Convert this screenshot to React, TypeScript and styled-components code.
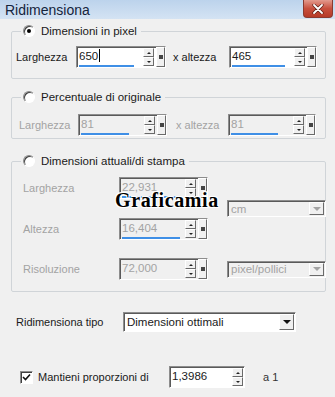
import React from 'react'
import styled, { createGlobalStyle, css } from 'styled-components'

const GlobalStyle = createGlobalStyle`
  * { box-sizing: border-box; }
  body {
    margin: 0;
    background: #f0f0f0;
    font-family: 'Liberation Sans', Arial, sans-serif;
    font-size: 11px;
    color: #1a1a1a;
  }
`

const Window = styled.div`
  position: relative;
  width: 335px;
  height: 397px;
  overflow: hidden;
  background: #f0f0f0;
`

const TitleBar = styled.div`
  display: flex;
  align-items: center;
  height: 19px;
  padding-left: 5px;
  background: linear-gradient(#bcd3ec, #d4e3f3);
  font-size: 14px;
  color: #14243c;
`

const CloseButton = styled.div`
  display: flex;
  align-items: center;
  justify-content: center;
  align-self: flex-start;
  margin-left: auto;
  margin-right: 2px;
  width: 30px;
  height: 18px;
  border: 1px solid #8a3a30;
  border-top: none;
  border-radius: 0 0 4px 4px;
  background: linear-gradient(#e39a8d, #c8503e 50%, #b63a28);
`

const Body = styled.div`
  padding: 5px 9px 0 11px;
`

const Group = styled.fieldset<{ $mt?: number }>`
  margin: ${({ $mt }) => $mt || 0}px 0 0 0;
  padding: 0;
  min-width: 0;
  border: 1px solid #d0d4d8;
  border-radius: 2px;
`

const Legend = styled.legend`
  display: flex;
  align-items: center;
  gap: 6px;
  margin-left: 9px;
  padding: 0 4px 0 2px;
  height: 14px;
  line-height: 14px;
  font-size: 11.5px;
  color: #1a1a1a;
`

const Radio = styled.span<{ $checked?: boolean }>`
  display: inline-flex;
  align-items: center;
  justify-content: center;
  width: 12px;
  height: 12px;
  border-radius: 50%;
  background: #fff;
  border: 1px solid;
  border-color: #8a8a8a #fff #fff #8a8a8a;
  box-shadow: inset 1px 1px 0 #404040;
  ${({ $checked }) =>
    $checked &&
    css`
      &::after {
        content: '';
        width: 4px;
        height: 4px;
        border-radius: 50%;
        background: #000;
      }
    `}
`

const GroupInner = styled.div<{ $pt: number; $pb: number; $pl: number }>`
  padding: ${({ $pt, $pb, $pl }) => `${$pt}px 0 ${$pb}px ${$pl}px`};
`

const Row = styled.div`
  display: flex;
  align-items: center;
`

const Label = styled.span<{ $w: number; $disabled?: boolean; $pl?: number }>`
  flex: none;
  width: ${({ $w }) => $w}px;
  padding-left: ${({ $pl }) => $pl || 0}px;
  color: ${({ $disabled }) => ($disabled ? '#a3a3a3' : '#1a1a1a')};
  white-space: nowrap;
`

const FieldBox = styled.div<{ $w: number; $disabled?: boolean }>`
  flex: none;
  display: flex;
  width: ${({ $w }) => $w}px;
  height: 22px;
  border: 1px solid;
  border-color: #8d8d8d #ffffff #ffffff #8d8d8d;
  box-shadow: inset 1px 1px 0 #5a5a5a;
  background: ${({ $disabled }) => ($disabled ? '#f0f0f0' : '#fff')};
  color: ${({ $disabled }) => ($disabled ? '#a3a3a3' : '#1a1a1a')};
  font-size: 11.5px;
`

const FieldText = styled.div`
  flex: 1;
  display: flex;
  flex-direction: column;
  padding: 2px 0 0 2px;
  line-height: 14px;
`

const Caret = styled.span`
  display: inline-block;
  width: 1px;
  height: 13px;
  margin-left: 1px;
  vertical-align: -2px;
  background: #000;
`

const Bar = styled.div`
  margin-top: auto;
  height: 2px;
  background: #3f8fe6;
`

const SpinCol = styled.div`
  display: flex;
  flex-direction: column;
  justify-content: center;
  width: 11px;
  margin: 1px 1px 1px 3px;
`

const SpinBtn = styled.div`
  display: flex;
  align-items: center;
  justify-content: center;
  height: 9px;
  background: #f0f0f0;
  border: 1px solid;
  border-color: #fff #6a6a6a #6a6a6a #fff;
`

const ArrowUp = styled.span`
  width: 0;
  height: 0;
  border-left: 2px solid transparent;
  border-right: 2px solid transparent;
  border-bottom: 2px solid #222;
`

const ArrowDown = styled(ArrowUp)`
  border-bottom: none;
  border-top: 2px solid #222;
`

const Extra = styled.div`
  display: flex;
  align-items: center;
  justify-content: center;
  width: 9px;
  margin: 0 0 0 1px;
  background: #f0f0f0;
  border: 1px solid;
  border-color: #fff #6a6a6a #6a6a6a #fff;
`

const Square = styled.span`
  width: 4px;
  height: 4px;
  background: #444;
`

const SelectBox = styled.div<{ $w: number; $h: number; $disabled?: boolean }>`
  flex: none;
  display: flex;
  align-items: center;
  width: ${({ $w }) => $w}px;
  height: ${({ $h }) => $h}px;
  border: 1px solid;
  border-color: #8d8d8d #ffffff #ffffff #8d8d8d;
  box-shadow: inset 1px 1px 0 #5a5a5a;
  background: ${({ $disabled }) => ($disabled ? '#f0f0f0' : '#fff')};
  color: ${({ $disabled }) => ($disabled ? '#a3a3a3' : '#1a1a1a')};
  padding: 1px 1px 1px 3px;
  font-size: 11.5px;
`

const SelectText = styled.span`
  flex: 1;
  white-space: nowrap;
`

const SelectBtn = styled.div`
  display: flex;
  align-items: center;
  justify-content: center;
  width: 15px;
  height: 100%;
  background: #f0f0f0;
  border: 1px solid;
  border-color: #fff #6a6a6a #6a6a6a #fff;
`

const DownTri = styled.span<{ $disabled?: boolean }>`
  width: 0;
  height: 0;
  border-left: 4px solid transparent;
  border-right: 4px solid transparent;
  border-top: 4px solid ${({ $disabled }) => ($disabled ? '#a3a3a3' : '#111')};
`

const PrintGrid = styled.div`
  display: grid;
  grid-template-columns: 77px 89px 99px;
  grid-template-rows: 22px 19px 22px 18px 22px;
  column-gap: 19px;
  align-items: center;
`

const GridCell = styled.div<{ $row: number; $col: number }>`
  grid-row: ${({ $row }) => $row};
  grid-column: ${({ $col }) => $col};
  display: flex;
  align-items: center;
`

const Watermark = styled.div`
  position: absolute;
  left: 115px;
  top: 189px;
  font-family: 'Liberation Serif', 'Times New Roman', serif;
  font-weight: bold;
  font-size: 20px;
  letter-spacing: 0.6px;
  color: #000;
  text-shadow: 1px 1px 0 #fff, -1px -1px 0 #fff, 1px -1px 0 #fff, -1px 1px 0 #fff;
`

const BottomRow = styled(Row)<{ $mt: number; $pl: number }>`
  margin-top: ${({ $mt }) => $mt}px;
  padding-left: ${({ $pl }) => $pl}px;
`

const CheckBox = styled.span`
  flex: none;
  display: flex;
  align-items: center;
  justify-content: center;
  width: 13px;
  height: 13px;
  background: #fff;
  border: 1px solid;
  border-color: #8d8d8d #fff #fff #8d8d8d;
  box-shadow: inset 1px 1px 0 #404040;
`

const After = styled.span`
  margin-left: 18px;
  color: #333;
`

interface FieldProps {
  width: number
  value: string
  disabled?: boolean
  bar?: number
  caret?: boolean
  extra?: boolean
}

const SpinField: React.FC<FieldProps> = ({ width, value, disabled, bar, caret, extra = true }) => (
  <FieldBox $w={width} $disabled={disabled}>
    <FieldText>
      <span>
        {value}
        {caret && <Caret />}
      </span>
      {bar ? <Bar style={{ width: bar }} /> : null}
    </FieldText>
    <SpinCol>
      <SpinBtn>
        <ArrowUp />
      </SpinBtn>
      <SpinBtn>
        <ArrowDown />
      </SpinBtn>
    </SpinCol>
    {extra && (
      <Extra>
        <Square />
      </Extra>
    )}
  </FieldBox>
)

const Select: React.FC<{ width: number; height: number; value: string; disabled?: boolean }> = ({
  width,
  height,
  value,
  disabled,
}) => (
  <SelectBox $w={width} $h={height} $disabled={disabled}>
    <SelectText>{value}</SelectText>
    <SelectBtn>
      <DownTri $disabled={disabled} />
    </SelectBtn>
  </SelectBox>
)

export default function App() {
  return (
    <Window>
      <GlobalStyle />
      <TitleBar>
        Ridimensiona
        <CloseButton>
          <svg width="12" height="10" viewBox="0 0 12 10">
            <path d="M2 1 L10 9 M10 1 L2 9" stroke="#5a1c14" strokeWidth="3.2" strokeLinecap="round" />
            <path d="M2 1 L10 9 M10 1 L2 9" stroke="#fff" strokeWidth="1.8" strokeLinecap="round" />
          </svg>
        </CloseButton>
      </TitleBar>

      <Body>
        <Group>
          <Legend>
            <Radio $checked />
            Dimensioni in pixel
          </Legend>
          <GroupInner $pt={8} $pb={10} $pl={4}>
            <Row>
              <Label $w={60}>Larghezza</Label>
              <SpinField width={90} value="650" caret bar={55} />
              <Label $w={63} $pl={7}>x altezza</Label>
              <SpinField width={88} value="465" bar={53} />
            </Row>
          </GroupInner>
        </Group>

        <Group $mt={11}>
          <Legend>
            <Radio />
            Percentuale di originale
          </Legend>
          <GroupInner $pt={10} $pb={2} $pl={7}>
            <Row>
              <Label $w={59} $disabled>Larghezza</Label>
              <SpinField width={89} value="81" disabled bar={48} />
              <Label $w={61} $pl={9} $disabled>x altezza</Label>
              <SpinField width={88} value="81" disabled bar={47} />
            </Row>
          </GroupInner>
        </Group>

        <Group $mt={15}>
          <Legend>
            <Radio />
            Dimensioni attuali/di stampa
          </Legend>
          <GroupInner $pt={9} $pb={11} $pl={11}>
            <PrintGrid>
              <GridCell $row={1} $col={1}>
                <Label $w={77} $disabled>Larghezza</Label>
              </GridCell>
              <GridCell $row={1} $col={2}>
                <SpinField width={89} value="22,931" disabled bar={58} />
              </GridCell>
              <GridCell $row={2} $col={3}>
                <Select width={99} height={17} value="cm" disabled />
              </GridCell>
              <GridCell $row={3} $col={1}>
                <Label $w={77} $disabled>Altezza</Label>
              </GridCell>
              <GridCell $row={3} $col={2}>
                <SpinField width={89} value="16,404" disabled bar={58} />
              </GridCell>
              <GridCell $row={5} $col={1}>
                <Label $w={77} $disabled>Risoluzione</Label>
              </GridCell>
              <GridCell $row={5} $col={2}>
                <SpinField width={89} value="72,000" disabled />
              </GridCell>
              <GridCell $row={5} $col={3}>
                <Select width={99} height={17} value="pixel/pollici" disabled />
              </GridCell>
            </PrintGrid>
          </GroupInner>
        </Group>

        <BottomRow $mt={20} $pl={5}>
          <Label $w={107}>Ridimensiona tipo</Label>
          <Select width={173} height={20} value="Dimensioni ottimali" />
        </BottomRow>

        <BottomRow $mt={34} $pl={9}>
          <CheckBox>
            <svg width="9" height="8" viewBox="0 0 9 8">
              <path d="M1 4 L3.5 6.5 L8 1.5" stroke="#111" strokeWidth="1.6" fill="none" />
            </svg>
          </CheckBox>
          <Label $w={136} $pl={5}>Mantieni proporzioni di</Label>
          <SpinField width={76} value="1,3986" extra={false} />
          <After>a 1</After>
        </BottomRow>
      </Body>

      <Watermark>Graficamia</Watermark>
    </Window>
  )
}
